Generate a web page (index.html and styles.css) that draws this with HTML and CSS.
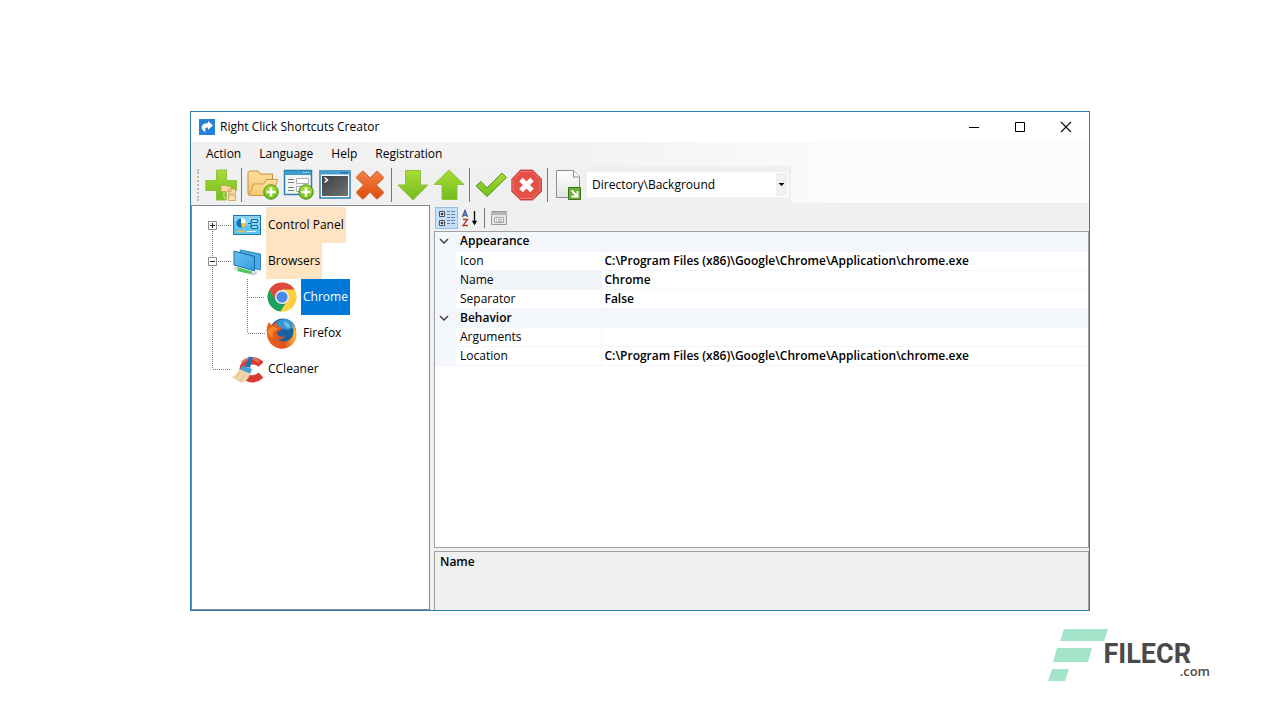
FILE: index.html
```html
<!DOCTYPE html>
<html lang="en">
<head>
<meta charset="utf-8">
<meta name="viewport" content="width=device-width, initial-scale=1">
<title>Right Click Shortcuts Creator</title>
<link rel="stylesheet" href="styles.css">
</head>
<body>
<svg class="defs" aria-hidden="true">
  <defs>
    <linearGradient id="green" x1="0" y1="0" x2="0" y2="1"><stop offset="0" stop-color="#a9db35"/><stop offset="1" stop-color="#72be1e"/></linearGradient>
    <linearGradient id="orange" x1="0" y1="0" x2="0" y2="1"><stop offset="0" stop-color="#f4804a"/><stop offset="1" stop-color="#dc4c08"/></linearGradient>
    <linearGradient id="folder" x1="0" y1="0" x2="0" y2="1"><stop offset="0" stop-color="#ffe0a0"/><stop offset="1" stop-color="#f3c670"/></linearGradient>
    <linearGradient id="blue" x1="0" y1="0" x2="1" y2="1"><stop offset="0" stop-color="#6cc0f0"/><stop offset="1" stop-color="#2f9fe0"/></linearGradient>
    <linearGradient id="paper" x1="0" y1="0" x2="0" y2="1"><stop offset="0" stop-color="#fff"/><stop offset="1" stop-color="#e2e4e4"/></linearGradient>
    <linearGradient id="dark" x1="0" y1="0" x2="1" y2="1"><stop offset="0" stop-color="#3d4042"/><stop offset="1" stop-color="#707374"/></linearGradient>
    <linearGradient id="fox" x1="0" y1="0" x2="1" y2="0"><stop offset="0" stop-color="#e8641c"/><stop offset=".6" stop-color="#dd5320"/><stop offset="1" stop-color="#fbc33a"/></linearGradient>
    <symbol id="add" viewBox="0 0 16 16"><circle cx="8" cy="8" r="7.2" fill="url(#green)" stroke="#3f8d12"/><path d="M8 3.500v9M3.500 8h9" stroke="#fff" stroke-width="2.600"/></symbol>
  </defs>
</svg>

<main class="window">
  <header class="titlebar">
    <svg class="app-icon" viewBox="0 0 16 16"><rect width="16" height="16" fill="#2383d8"/><path d="M9 2l5 4.500-5 4.300V8.500C6.500 8.300 5.500 9.500 6.500 13 3.500 12 2 9.500 3 7c1-2.300 3.500-2.900 6-2.700z" fill="#fff"/></svg>
    <h1 class="title">Right Click Shortcuts Creator</h1>
    <div class="controls">
      <button class="control" aria-label="Minimize"><svg viewBox="0 0 12 12"><path d="M1 6.500h10" stroke="#000"/></svg></button>
      <button class="control" aria-label="Maximize"><svg viewBox="0 0 12 12"><path d="M1.500 1.500h9v9h-9z" fill="none" stroke="#000"/></svg></button>
      <button class="control" aria-label="Close"><svg viewBox="0 0 12 12"><path d="M1 1l10 10M11 1L1 11" stroke="#111" stroke-width="1.200"/></svg></button>
    </div>
  </header>

  <div class="bars">
    <nav class="menu">
      <button class="menu-item">Action</button>
      <button class="menu-item">Language</button>
      <button class="menu-item">Help</button>
      <button class="menu-item">Registration</button>
    </nav>
    <div class="toolbar" role="toolbar" aria-label="Tools">
      <span class="grip"></span>
      <button class="tool" aria-label="Add shortcut"><svg viewBox="0 0 32 32"><path d="M11.500 1h10v10.500H31.500v10H21.500V31h-10v-9.500H.8v-10h10.700z" fill="url(#green)" stroke="#8cc23c"/><path d="M16 16.500h5l1 1h4v5h-10zM24.500 20h6v5h-7v-5zM23.500 26h7v5.500h-7z" fill="#fae0a5" stroke="#c99a52" stroke-width=".8"/><path d="M19 23v6h4M22 24v-2" fill="none" stroke="#e8d6b0"/></svg></button>
      <span class="separator"></span>
      <button class="tool" aria-label="Add folder"><svg viewBox="0 0 32 32"><path d="M1 25V3.500L3 2h8l2 3h12.500V12L4 25z" fill="url(#folder)" stroke="#c78d35"/><path d="M2 26.500L6.500 15h10l3-4.500h11L26 26.500z" fill="url(#folder)" stroke="#d39a42"/><use href="#add" x="16" y="15" width="16" height="16"/></svg></button>
      <button class="tool" aria-label="Add command"><svg viewBox="0 0 32 32"><rect x="1.500" y="1.500" width="27" height="24" fill="#f3f4f4" stroke="#2b81ae" stroke-width="1.500"/><path d="M2 2h26v4H2z" fill="#3e9bd0"/><path d="M20 3.500h6" stroke="#c4e7f9" stroke-dasharray="1.500 1"/><path d="M13.500 9.500h12v5h-12zM13.500 17.500h12v5h-12z" fill="#fff" stroke="#a9adaf"/><path d="M5 10.500h6M5 13.500h6M5 18.500h6M5 21.500h6" stroke="#777e82" stroke-width="1.200"/><use href="#add" x="15" y="15" width="16" height="16"/></svg></button>
      <button class="tool" aria-label="Console"><svg viewBox="0 0 32 32"><rect x="1" y="2" width="30" height="27" fill="#fff" stroke="#287faf" stroke-width="1.500"/><path d="M1.500 2h29v3.500h-29z" fill="#469fce"/><path d="M22 3.700h7" stroke="#1b5273" stroke-width="1.500" stroke-dasharray="1.500 1"/><path d="M3 7h26v20H3z" fill="url(#dark)"/><path d="M5.500 8.500l3 2.500-3 2.500" fill="none" stroke="#fff" stroke-width="1.500"/></svg></button>
      <button class="tool" aria-label="Delete"><svg viewBox="0 0 32 32"><path d="M2 7.500L7 2.500q1-.8 2 .2l6 6.300 6-6.300q1-1 2 0l5 5q1 1 0 2L21.500 16l6.500 6.500q1 1 0 2l-5 5q-1 1-2 0L15 23l-6 6.500q-1 1-2 0l-5-5q-1-1 0-2L8.500 16 2 9.500q-1-1 0-2z" fill="url(#orange)" stroke="#d4622f"/></svg></button>
      <span class="separator"></span>
      <button class="tool" aria-label="Move down"><svg viewBox="0 0 32 32"><path d="M8.500 1.500h15V16H31L16 31 1 16h7.500z" fill="url(#green)" stroke="#8cc23c"/></svg></button>
      <button class="tool" aria-label="Move up"><svg viewBox="0 0 32 32"><path d="M16 1l15 14.500h-7V30.500H9V15.500H1z" fill="url(#green)" stroke="#8cc23c"/></svg></button>
      <span class="separator"></span>
      <button class="tool" aria-label="Apply"><svg viewBox="0 0 32 32"><path d="M1 17l5-4.500 6 6.500L27 4l4.500 4.500L12 27.500z" fill="url(#green)" stroke="#568f1b"/></svg></button>
      <button class="tool" aria-label="Cancel"><svg viewBox="0 0 32 32"><path d="M9.500 1h12l9 9v12.500l-9 8.500h-12L.8 22.500V10z" fill="#cf4139" stroke="#b9342d" stroke-width=".8"/><path d="M10 2.500h11l8 8v11l-8 8H10l-8-8v-11z" fill="#e44f46" stroke="#f08078"/><path d="M10 10.500l11 11M21 10.500l-11 11" stroke="#fff" stroke-width="5"/></svg></button>
      <span class="separator"></span>
      <button class="tool" aria-label="Shortcut target"><svg viewBox="0 0 32 32"><path d="M3.500 1.500h17L26.500 8v20.500h-23z" fill="url(#paper)" stroke="#8b8e8e"/><path d="M20.500 1.500V8h6" fill="#fff" stroke="#8b8e8e"/><path d="M15.500 18.500h12V30.500H15.500z" fill="#71ae36" stroke="#38751a"/><path d="M18.500 21.500l6 6M24.500 22v5.500h-6" fill="none" stroke="#fff" stroke-width="1.800"/></svg></button>
      <div class="combo">
        <select class="combo-field" aria-label="Location type"><option>Directory\Background</option></select>
        <svg class="combo-arrow" viewBox="0 0 11 23"><path d="M2.500 10h6l-3 3z" fill="#000"/></svg>
      </div>
    </div>
  </div>

  <div class="content">
    <ul class="tree" role="tree">
      <li class="node" role="treeitem">
        <svg class="guide" viewBox="0 0 39 36"><path d="M20.500 22v14M26 18.500h13" class="dots"/><path d="M16.500 14.500h8v8h-8z" class="box"/><path d="M18 18.500h5M20.500 16v5" stroke="#223"/></svg>
        <svg class="node-icon" viewBox="0 0 32 32"><rect x="2.500" y="6.500" width="27" height="19" fill="#62c2ee" stroke="#1978ac"/><path d="M3 7h26v13L3 12z" fill="#b9e7fa" opacity=".45"/><circle cx="10" cy="14" r="4.500" fill="#0d72bd"/><path d="M10 14V9a5 5 0 0 1 5 5z" fill="#fff"/><path d="M10 14h5a5 5 0 0 1-4 4.700z" fill="#ffc23b"/><path d="M20.500 10.500h6v3h-6zM20.500 16.500h6v3h-6zM17 14.500h3v-3M20 18v-3" fill="#a4dcf7" stroke="#096ca9"/><path d="M6 22.500h8" stroke="#ffbe32" stroke-width="1.500"/><path d="M16 22.500h9" stroke="#e3f7ff"/></svg>
        <span class="label marked">Control Panel</span>
      </li>
      <li class="node" role="treeitem">
        <svg class="guide" viewBox="0 0 39 36"><path d="M20.500 0v14M20.500 22v14M26 18.500h13" class="dots"/><path d="M16.500 14.500h8v8h-8z" class="box"/><path d="M18 18.500h5" stroke="#223"/></svg>
        <svg class="node-icon" viewBox="0 0 32 32"><path d="M9 5l20.500 4v16L11 21z" fill="#4aabe6" stroke="#1a6fa8" stroke-width=".8"/><path d="M3 6l20.500 5.500V26L3 20z" fill="url(#blue)" stroke="#14649c" stroke-width=".9"/><path d="M6 22l15 4.500v3L6 26z" fill="#51c45e"/><path d="M3 21.500l4 1v3l-4-1zM20 28l6-2v3l-5 2z" fill="#d0d6d9"/></svg>
        <span class="label marked">Browsers</span>
      </li>
      <li class="node selected" role="treeitem" aria-selected="true">
        <svg class="guide child" viewBox="0 0 74 36"><path d="M20.500 0v36M55.500 0v36M57 18.500h16" class="dots"/></svg>
        <svg class="node-icon" viewBox="0 2 32 32"><circle cx="16" cy="18" r="14.500" fill="#ffce43"/><path d="M16 18L9.500 22 3.400 10.800A14.500 14.500 0 0 1 28.600 10.800H16z" fill="#dc4b3e"/><path d="M3.400 10.800L9.700 21.600 16 24.500l3.500 0-5 7.900A14.500 14.500 0 0 1 3.400 10.800z" fill="#1ba261"/><path d="M16 10.800h12.600A14.500 14.500 0 0 1 14.500 32.400l7.500-10.800z" fill="#ffce43"/><circle cx="16" cy="18" r="7" fill="#f2f2f2"/><circle cx="16" cy="18" r="5.600" fill="#4a88ed"/></svg>
        <span class="label">Chrome</span>
      </li>
      <li class="node" role="treeitem">
        <svg class="guide child" viewBox="0 0 74 36"><path d="M20.500 0v36M55.500 0v18M56 18.500h17" class="dots"/></svg>
        <svg class="node-icon" viewBox="0 0 32 32"><circle cx="17" cy="14.500" r="13" fill="#1b5f9f"/><path d="M14 3c7-3 12 1 14 7l-6 3-8-2-6-4z" fill="#3597cf"/><path d="M17 4l5 2 3 5-5-1z" fill="#6fc0e6"/><path d="M3 5c1 2 2 3 4 3 1-2 3-3 5-3-1 2-1 4 1 5 3 0 4 1 2 3l-4 2c0 4 4 6 8 4-1 3-5 4-8 3 5 4 12 3 15-2 2-4 2-10-1-15 4 4 7 11 5 17A15 15 0 0 1 1 17C0 12 1 8 3 5z" fill="url(#fox)"/><path d="M2 14c1-3 4-5 7-4l3 2-4 2c-2 2-2 4-1 7-3-1-5-4-5-7z" fill="#f4882a"/></svg>
        <span class="label">Firefox</span>
      </li>
      <li class="node" role="treeitem">
        <svg class="guide" viewBox="0 0 39 36"><path d="M20.500 0v18M21 18.500h18" class="dots"/></svg>
        <svg class="node-icon" viewBox="0 0 32 32"><path d="M30 11.500C24 5 13 8 12 16s9 14 18 6" fill="none" stroke="#d93b32" stroke-width="7"/><path d="M28 9C23 4 14 5 11 10" fill="none" stroke="#ee6c5c" stroke-width="2.500"/><path d="M18 3.500l4 1L19 15l-5-2z" fill="#2474b5"/><path d="M11 12.500l10 3.500-2 5-10-4z" fill="#3f9fd8"/><path d="M8 16l11 4.500c-1 5-4 8-9 9.500l-9-6c3-1 5-4 7-8z" fill="#ecd5a6"/><path d="M5 25l4-5M9 28l5-6" stroke="#d3b77f" stroke-width=".8"/></svg>
        <span class="label">CCleaner</span>
      </li>
    </ul>

    <section class="properties">
      <div class="grid-tools">
        <button class="grid-tool active" aria-label="Categorized"><svg viewBox="0 0 20 20"><path d="M2.500 3.500h5v5h-5zM2.500 12.500h5v5h-5z" fill="#fff" stroke="#456"/><path d="M3.500 6h3M5 4.500v3M3.500 15h3M5 13.500v3" stroke="#000"/><path d="M10 3.500h3M10 6.500h3M10 9.500h3M10 12.500h3M10 15.500h3M14 3.500h4M14 6.500h4M14 9.500h4M14 12.500h4M14 15.500h4" stroke="#5e82ac"/></svg></button>
        <button class="grid-tool" aria-label="Alphabetical"><svg viewBox="0 0 20 20"><path d="M2.500 9L5 2.500 7.500 9M3.500 7h3" fill="none" stroke="#36529d" stroke-width="1.300"/><path d="M3 11.500h4.500L3 17.500h5" fill="none" stroke="#a93c30" stroke-width="1.300"/><path d="M14.500 3v13M13 13.500l1.500 2.500 1.500-2.500z" fill="#000" stroke="#000" stroke-width="1.300"/></svg></button>
        <span class="grid-separator"></span>
        <button class="grid-tool" aria-label="Property pages" disabled><svg viewBox="0 0 20 20"><path d="M1.500 3.500h15v13h-15z" fill="#e5e5e5" stroke="#999"/><path d="M1 4h16v3H1z" fill="#b5b5b5"/><path d="M4.500 9.500h9v5h-9z" fill="#eee" stroke="#aaa"/><path d="M6 11.500h1M8 11.500h4M6 13.500h1M8 13.500h4" stroke="#aaa"/></svg></button>
      </div>
      <div class="grid-box">
        <table class="grid">
          <colgroup><col class="col-gutter"><col class="col-name"><col></colgroup>
          <tbody>
            <tr class="category"><td class="gutter"><svg class="chevron" viewBox="0 0 10 6"><path d="M1 1l4 4 4-4"/></svg></td><th colspan="2">Appearance</th></tr>
            <tr><td class="gutter"></td><th scope="row">Icon</th><td class="value">C:\Program Files (x86)\Google\Chrome\Application\chrome.exe</td></tr>
            <tr class="current"><td class="gutter"></td><th scope="row">Name</th><td class="value">Chrome</td></tr>
            <tr><td class="gutter"></td><th scope="row">Separator</th><td class="value">False</td></tr>
            <tr class="category"><td class="gutter"><svg class="chevron" viewBox="0 0 10 6"><path d="M1 1l4 4 4-4"/></svg></td><th colspan="2">Behavior</th></tr>
            <tr><td class="gutter"></td><th scope="row">Arguments</th><td class="value"></td></tr>
            <tr><td class="gutter"></td><th scope="row">Location</th><td class="value">C:\Program Files (x86)\Google\Chrome\Application\chrome.exe</td></tr>
          </tbody>
        </table>
      </div>
      <div class="help"><h2 class="help-title">Name</h2></div>
    </section>
  </div>
</main>

<footer class="brand">
  <svg class="brand-mark" viewBox="0 0 60 54"><path d="M16 1h44l-4 12H12zM9 20h35l-4 14H5zM4 41h17l-4 12H0z" fill="#a3e4ca"/></svg>
  <div class="brand-text"><span class="brand-name">FILECR</span><span class="brand-domain">.com</span></div>
</footer>
</body>
</html>
```
FILE: styles.css
```css
* { box-sizing: border-box; }
body {
  margin: 0;
  min-height: 100vh;
  padding-top: 111px;
  display: flex;
  flex-direction: column;
  align-items: center;
  background: #fff;
  color: #000;
  font: 12px/16px "Open Sans", "Noto Sans", sans-serif;
}
button, select { font: inherit; color: inherit; border: 0; padding: 0; background: none; }
svg { display: block; flex: none; }
.defs { position: absolute; width: 0; height: 0; }

.window {
  width: 100%;
  max-width: 900px;
  min-height: 500px;
  display: flex;
  flex-direction: column;
  border: 1px solid #2a80ac;
  background: #f0f0f0;
}
.titlebar { display: flex; align-items: center; height: 30px; padding-left: 8px; background: #fff; }
.app-icon { width: 16px; height: 16px; }
.title { flex: 1; margin: 0 0 0 5px; font-size: 12px; font-weight: 400; }
.controls { display: flex; }
.control { width: 46px; height: 28px; display: grid; place-items: center; }
.control svg { width: 12px; height: 12px; }

.bars { background: linear-gradient(90deg, #f0f0f0, #f3f3f3 45%, #fcfcfc 75%); }
.menu { display: flex; gap: 2px; height: 24px; padding-left: 7px; }
.menu-item { padding: 0 8px; }
.toolbar { display: flex; align-items: center; width: 600px; max-width: 100%; height: 37px; padding-left: 6px; background: #f0f0f0; }
.grip { width: 6px; height: 32px; border-left: 2px dotted #b8b8b8; }
.tool { width: 36px; height: 36px; flex: none; display: grid; place-items: center; }
.tool svg { width: 32px; height: 32px; }
.separator { width: 6px; height: 34px; flex: none; display: flex; padding-left: 2px; }
.separator::before { content: ""; width: 1px; background: #777; }
.combo { display: flex; width: 201px; height: 25px; padding: 1px; background: #fff; }
.combo-field { flex: 1; min-width: 0; padding-left: 4px; appearance: none; }
.combo-arrow { width: 11px; height: 23px; background: #f0f0f0; }

.content { flex: 1; display: flex; border-top: 2px solid #f0f0f0; }
.tree {
  flex: none;
  width: 239px;
  margin: 0 4px 0 0;
  padding: 1px 0;
  list-style: none;
  background: #fff;
  border: 1px solid #828790;
}
.node { display: flex; height: 36px; }
.guide { width: 39px; height: 36px; }
.guide.child { width: 74px; }
.dots { fill: none; stroke: #777; stroke-dasharray: 1 1; }
.box { fill: #fff; stroke: #8c8c8c; }
.node-icon { width: 32px; height: 36px; }
.label { margin-left: 3px; padding: 0 2px; line-height: 36px; }
.marked { background: #ffe4c4; }
.selected .label { background: #0078d7; color: #fff; }

.properties { flex: 1; min-width: 0; display: flex; flex-direction: column; }
.grid-tools { display: flex; align-items: center; height: 26px; padding: 1px; }
.grid-tool { width: 23px; height: 22px; display: grid; place-items: center; }
.grid-tool svg { width: 20px; height: 20px; }
.grid-tool.active { background: #c5dff7; border: 1px solid #92c0e8; }
.grid-separator { width: 1px; height: 20px; margin: 0 3px; background: #777; }
.grid-box { flex: 1; border: 1px solid #a0a0a0; background: #fff; }
.grid { width: 100%; border-collapse: collapse; table-layout: fixed; }
.col-gutter { width: 21px; }
.col-name { width: 145px; }
.grid tr { height: 19px; }
.grid th, .grid td { padding: 0 4px; border-bottom: 1px solid #f2f5fa; line-height: 18px; text-align: left; white-space: nowrap; overflow: hidden; }
.grid th { font-weight: 400; }
.grid .gutter, .grid .category th { background: #f3f6fb; }
.grid .category th, .grid .value, .help-title { font-weight: 600; }
.grid .value { border-left: 1px solid #f2f5fa; padding-left: 3px; }
.current th { background: #f1f5fa; }
.chevron { width: 10px; height: 6px; }
.chevron path { fill: none; stroke: #444; stroke-width: 1.5; }
.help { height: 59px; margin-top: 3px; padding: 2px 5px; border: 1px solid #a0a0a0; border-bottom: 0; }
.help-title { margin: 0; font-size: 12px; line-height: 16px; }

.brand { display: flex; align-self: flex-end; margin: 17px 70px 0 0; }
.brand-mark { width: 60px; height: 54px; }
.brand-text { display: flex; flex-direction: column; align-items: flex-end; margin-left: -4px; padding-top: 14px; color: #4a4a4a; }
.brand-name { padding-right: 19px; font: 700 27px/24px Roboto, sans-serif; }
.brand-domain { font: 600 13px/10px "Open Sans", sans-serif; }
```
